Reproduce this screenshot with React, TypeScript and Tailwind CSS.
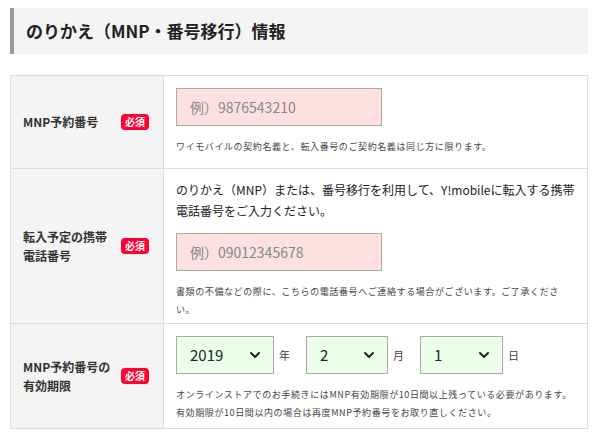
import { ChevronDown } from 'lucide-react';

const font = { fontFamily: '"Noto Sans CJK JP", "Liberation Sans", sans-serif' };

const Req = () => (
  <span className="rounded-sm bg-[#ff0033] px-1 py-[1px] text-[10px] leading-[14px] text-white">必須</span>
);

const Select = ({ value, w }: { value: string; w: string }) => (
  <div className={`flex h-[38px] items-center justify-between border border-[#aaa] bg-[#ebffe9] pl-[13px] pr-[10px] text-[15px] text-[#222] ${w}`}>
    <span>{value}</span>
    <ChevronDown className="h-4 w-4" strokeWidth={3} />
  </div>
);

export default function App() {
  return (
    <div className="h-[441px] w-[600px] bg-white px-[10px] pt-[8px]" style={font}>
      <div className="flex h-[46px] w-[578px] items-center border-l-[4px] border-[#999] bg-[#f4f4f4] pl-[12px] text-[17px] font-bold text-[#222]">
        のりかえ（MNP・番号移行）情報
      </div>
      <div className="mt-[21px] w-[578px] border border-[#ddd] text-[#333]">
        <div className="flex h-[93px] border-b border-[#ddd]">
          <div className="flex w-[153px] shrink-0 items-center justify-between border-r border-[#ddd] bg-[#f4f4f4] pl-[12px] pr-[14px] text-[12px] font-bold">
            <span>MNP予約番号</span>
            <Req />
          </div>
          <div className="pl-[12px] pt-[12px]">
            <div className="flex h-[38px] w-[206px] items-center border border-[#aaa] bg-[#fde0e0] pl-[13px] text-[14px] text-[#888]">例）9876543210</div>
            <p className="mt-[14px] text-[9px] tracking-[0.6px] text-[#444]">ワイモバイルの契約名義と、転入番号のご契約名義は同じ方に限ります。</p>
          </div>
        </div>
        <div className="flex h-[155px] border-b border-[#ddd]">
          <div className="flex w-[153px] shrink-0 items-center justify-between border-r border-[#ddd] bg-[#f4f4f4] pl-[12px] pr-[14px] text-[12px] font-bold leading-[19px]">
            <span>転入予定の携帯<br />電話番号</span>
            <Req />
          </div>
          <div className="pl-[12px] pr-[10px] pt-[10px]">
            <p className="text-[12px] leading-[21px] text-[#222]">のりかえ（MNP）または、番号移行を利用して、Y!mobileに転入する携帯電話番号をご入力ください。</p>
            <div className="mt-[12px] flex h-[38px] w-[206px] items-center border border-[#aaa] bg-[#fde0e0] pl-[13px] text-[14px] text-[#888]">例）09012345678</div>
            <p className="mt-[12px] text-[9px] leading-[18px] tracking-[0.6px] text-[#444]">書類の不備などの際に、こちらの電話番号へご連絡する場合がございます。ご了承ください。</p>
          </div>
        </div>
        <div className="flex h-[104px]">
          <div className="flex w-[153px] shrink-0 items-center justify-between border-r border-[#ddd] bg-[#f4f4f4] pl-[12px] pr-[14px] text-[12px] font-bold leading-[19px]">
            <span>MNP予約番号の<br />有効期限</span>
            <Req />
          </div>
          <div className="pl-[12px] pr-[10px] pt-[12px]">
            <div className="flex items-center text-[11px] text-[#444]">
              <Select value="2019" w="w-[98px]" />
              <span className="ml-[5px] w-[27px]">年</span>
              <Select value="2" w="w-[82px]" />
              <span className="ml-[5px] w-[27px]">月</span>
              <Select value="1" w="w-[83px]" />
              <span className="ml-[5px]">日</span>
            </div>
            <p className="mt-[12px] text-[9px] leading-[18px] tracking-[0.6px] text-[#444]">オンラインストアでのお手続きにはMNP有効期限が10日間以上残っている必要があります。有効期限が10日間以内の場合は再度MNP予約番号をお取り直しください。</p>
          </div>
        </div>
      </div>
    </div>
  );
}
